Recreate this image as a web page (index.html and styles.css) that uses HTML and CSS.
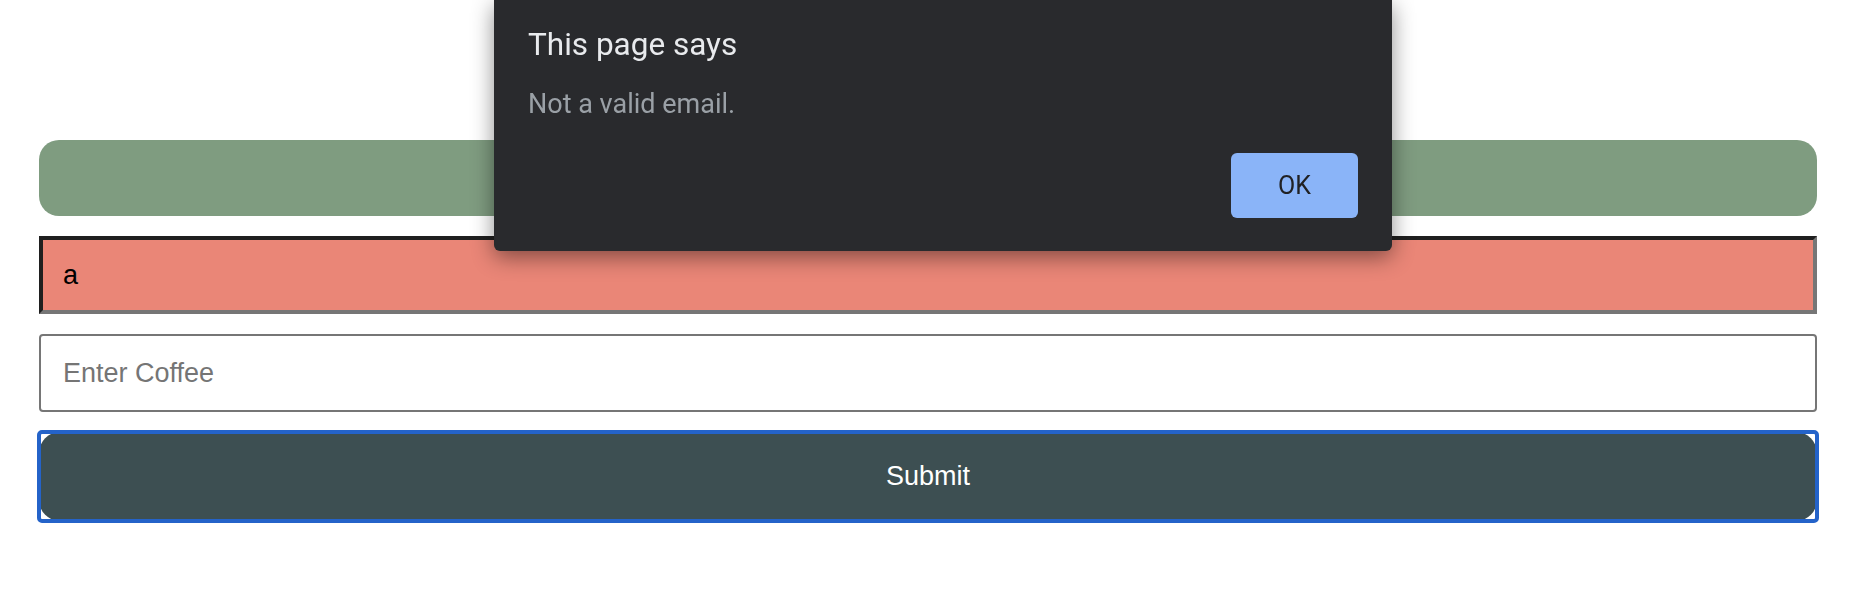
FILE: index.html
```html
<!DOCTYPE html>
<html lang="en">
<head>
<meta charset="utf-8">
<title>Coffee Order</title>
<link rel="stylesheet" href="styles.css">
</head>
<body>
  <main class="page">
    <form class="order-form" onsubmit="return false">
      <div class="banner"></div>
      <input class="field field-email" type="text" value="a" aria-label="Email">
      <input class="field field-coffee" type="text" placeholder="Enter Coffee" aria-label="Coffee">
      <button class="submit-btn" type="submit">Submit</button>
    </form>
  </main>

  <div class="alert-dialog" role="alertdialog">
    <div class="alert-title">This page says</div>
    <div class="alert-message">Not a valid email.</div>
    <div class="alert-actions">
      <button class="alert-ok" type="button">OK</button>
    </div>
  </div>
</body>
</html>
```

FILE: styles.css
```css
* {
  box-sizing: border-box;
}

html, body {
  margin: 0;
  padding: 0;
  background: #ffffff;
}

body {
  font-family: "Liberation Sans", Arial, sans-serif;
  width: 1865px;
  height: 607px;
  overflow: hidden;
}

.page {
  padding: 140px 48px 0 39px;
}

.order-form {
  display: flex;
  flex-direction: column;
  gap: 20px;
}

.banner {
  height: 76px;
  background: #7f9c80;
  border-radius: 20px;
}

.field {
  display: block;
  width: 100%;
  margin: 0;
  padding: 0 20px;
  font-family: "Liberation Sans", Arial, sans-serif;
  font-size: 27px;
  color: #000000;
  outline: none;
}

.field::placeholder {
  color: #757575;
}

.field-email {
  height: 78px;
  background: #ea8677;
  border-style: solid;
  border-width: 4px;
  border-color: #1f1f1f #767676 #767676 #1f1f1f;
  border-radius: 0;
}

.field-coffee {
  height: 78px;
  padding: 0 22px;
  background: #ffffff;
  border: 2px solid #767676;
  border-radius: 4px;
}

.submit-btn {
  position: relative;
  height: 89px;
  width: 100%;
  margin: 0;
  border: none;
  border-radius: 21px;
  background: #3d4f52;
  color: #ffffff;
  font-family: "Liberation Sans", Arial, sans-serif;
  font-size: 27px;
  cursor: pointer;
}

.submit-btn::after {
  content: "";
  position: absolute;
  inset: -2px;
  border: 4px solid #2463c9;
  border-radius: 5px;
  pointer-events: none;
}

.alert-dialog {
  position: fixed;
  top: 0;
  left: 494px;
  width: 898px;
  height: 251px;
  padding: 27px 34px 33px 34px;
  background: #292a2d;
  border-radius: 0 0 6px 6px;
  box-shadow: 0 6px 22px rgba(0, 0, 0, 0.45);
  font-family: Roboto, "Noto Sans", sans-serif;
  display: flex;
  flex-direction: column;
}

.alert-title {
  font-size: 31.5px;
  line-height: 36px;
  color: #e8eaed;
}

.alert-message {
  margin-top: 25px;
  font-size: 27px;
  line-height: 32px;
  color: #9aa0a6;
}

.alert-actions {
  margin-top: auto;
  display: flex;
  justify-content: flex-end;
}

.alert-ok {
  width: 127px;
  height: 65px;
  border: none;
  border-radius: 6px;
  background: #8ab4f8;
  color: #202124;
  font-family: Roboto, "Noto Sans", sans-serif;
  font-size: 25px;
  cursor: pointer;
}
```
